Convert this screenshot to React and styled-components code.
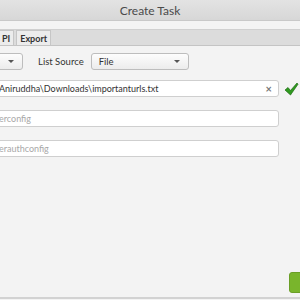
import React from "react";
import styled, { createGlobalStyle } from "styled-components";

const Global = createGlobalStyle`
  html, body { margin: 0; padding: 0; }
  body {
    width: 300px;
    height: 300px;
    overflow: hidden;
    background: #f3f3f3;
    font-family: "Lato", "Liberation Sans", sans-serif;
  }
`;

const Window = styled.div`
  width: 300px;
  height: 300px;
  display: flex;
  flex-direction: column;
  background: #f3f3f3;
  overflow: hidden;
`;

const TitleBar = styled.div`
  height: 20px;
  flex: none;
  display: flex;
  align-items: center;
  justify-content: center;
  background: linear-gradient(#e3e3e3, #d7d7d7);
  border-bottom: 1px solid #c9c9c9;
  color: #4a4a4a;
  font-size: 12px;
`;

const Gap = styled.div`
  height: 8px;
  flex: none;
  background: #f4f4f4;
`;

const TabStrip = styled.div`
  height: 15px;
  flex: none;
  display: flex;
  align-items: flex-end;
  gap: 2px;
  background: #dcdcdc;
  border-top: 1px solid #d0d0d0;
  border-bottom: 1px solid #c4c4c4;
  margin-left: -2px;
`;

const Tab = styled.div`
  height: 14px;
  padding: 0 3px;
  display: flex;
  align-items: center;
  background: #ececec;
  border: 1px solid #c6c6c6;
  border-bottom: none;
  color: #333;
  font-size: 9px;
  font-weight: bold;
`;

const Body = styled.div`
  flex: 1;
  display: flex;
  flex-direction: column;
  padding-top: 7px;
  margin-left: -3px;
`;

const Row = styled.div`
  display: flex;
  align-items: center;
  height: 17px;
  margin-bottom: ${(p) => p.$mb || 13}px;
`;

const Select = styled.div`
  width: ${(p) => p.$w}px;
  height: 17px;
  box-sizing: border-box;
  display: flex;
  align-items: center;
  justify-content: space-between;
  padding: 0 8px 0 7px;
  border: 1px solid #bdbdbd;
  border-radius: 3px;
  background: linear-gradient(#fdfdfd, #ececec);
  color: #333;
  font-size: 9.5px;
`;

const Arrow = styled.span`
  width: 0;
  height: 0;
  border-left: 3px solid transparent;
  border-right: 3px solid transparent;
  border-top: 3px solid #555;
`;

const Label = styled.span`
  margin: 0 7px 0 15px;
  color: #333;
  font-size: 9.5px;
`;

const Field = styled.div`
  width: 282px;
  height: 17px;
  box-sizing: border-box;
  display: flex;
  align-items: center;
  justify-content: space-between;
  padding: 0 6px 0 1px;
  background: #fff;
  border: 1px solid #cfcfcf;
  border-radius: 3px;
  font-size: 9px;
  color: ${(p) => (p.$placeholder ? "#a8a8a8" : "#333")};
`;

const Clear = styled.span`
  color: #777;
  font-size: 11px;
  font-weight: bold;
`;

const Check = styled.svg`
  margin-left: 5px;
  flex: none;
`;

const Footer = styled.div`
  margin-top: auto;
  display: flex;
  justify-content: flex-end;
  padding-bottom: 4px;
  border-bottom: 2px solid #d2d2d2;
  margin-left: 3px;
  margin-bottom: 1px;
`;

const GoButton = styled.div`
  width: 12px;
  height: 19px;
  margin-right: -3px;
  background: #79b52c;
  border: 1px solid #6a9e26;
  border-radius: 3px 0 0 3px;
`;

export default function App() {
  return (
    <Window>
      <Global />
      <TitleBar>Create Task</TitleBar>
      <Gap />
      <TabStrip>
        <Tab>PI</Tab>
        <Tab>Export</Tab>
      </TabStrip>
      <Body>
        <Row $mb={10}>
          <Select $w={26}>
            <span />
            <Arrow />
          </Select>
          <Label>List Source</Label>
          <Select $w={98}>
            <span>File</span>
            <Arrow />
          </Select>
        </Row>
        <Row>
          <Field>
            <span>Aniruddha\Downloads\importanturls.txt</span>
            <Clear>×</Clear>
          </Field>
          <Check width="15" height="14" viewBox="0 0 15 14">
            <path d="M1 8 L4 5.5 L6.5 8.5 L13 1 L14 2.2 L6.5 13 Z" fill="#2f9a1f" stroke="#1c6a12" strokeWidth="0.7" strokeLinejoin="round" />
          </Check>
        </Row>
        <Row>
          <Field $placeholder>erconfig</Field>
        </Row>
        <Row>
          <Field $placeholder>erauthconfig</Field>
        </Row>
        <Footer>
          <GoButton />
        </Footer>
      </Body>
    </Window>
  );
}
